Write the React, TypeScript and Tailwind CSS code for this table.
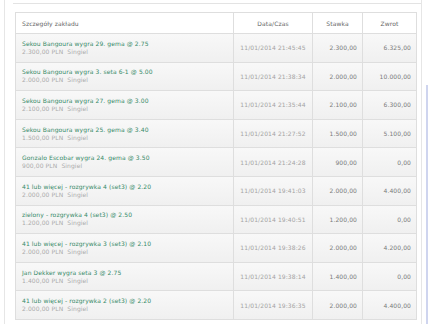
import React from "react";

const rows = [
  ["Sekou Bangoura wygra 29. gema @ 2.75", "2.300,00", "11/01/2014 21:45:45", "6.325,00"],
  ["Sekou Bangoura wygra 3. seta 6-1 @ 5.00", "2.000,00", "11/01/2014 21:38:34", "10.000,00"],
  ["Sekou Bangoura wygra 27. gema @ 3.00", "2.100,00", "11/01/2014 21:35:44", "6.300,00"],
  ["Sekou Bangoura wygra 25. gema @ 3.40", "1.500,00", "11/01/2014 21:27:52", "5.100,00"],
  ["Gonzalo Escobar wygra 24. gema @ 3.50", "900,00", "11/01/2014 21:24:28", "0,00"],
  ["41 lub więcej - rozgrywka 4 (set3) @ 2.20", "2.000,00", "11/01/2014 19:41:03", "4.400,00"],
  ["zielony - rozgrywka 4 (set3) @ 2.50", "1.200,00", "11/01/2014 19:40:51", "0,00"],
  ["41 lub więcej - rozgrywka 3 (set3) @ 2.10", "2.000,00", "11/01/2014 19:38:26", "4.200,00"],
  ["Jan Dekker wygra seta 3 @ 2.75", "1.400,00", "11/01/2014 19:38:14", "0,00"],
  ["41 lub więcej - rozgrywka 2 (set3) @ 2.20", "2.000,00", "11/01/2014 19:36:35", "4.400,00"],
];

export default function App() {
  return (
    <div
      className="flex w-[433px] h-[324px] bg-white overflow-hidden"
      style={{ fontFamily: '"DejaVu Sans", Verdana, sans-serif' }}
    >
      <div className="w-[4px] shrink-0" />
      <div className="w-[418px] shrink-0 border-l border-r border-[#e6e6e6] flex flex-col">
        <div className="h-[4px] ml-[8px] border-b border-[#e3e3e3]" />
        <div className="mt-[8px] ml-[10px] w-[402px] border border-[#dedede] text-[6px] tracking-[0.1px]">
          <div className="grid grid-cols-[217px_79px_50px_54px] h-[20px] bg-white text-[#666]">
            <div className="flex items-center pl-[6px]">Szczegóły zakładu</div>
            <div className="flex items-center justify-center border-l border-[#dedede]">Data/Czas</div>
            <div className="flex items-center justify-center border-l border-[#dedede]">Stawka</div>
            <div className="flex items-center justify-center border-l border-[#dedede]">Zwrot</div>
          </div>
          {rows.map((r, i) => (
            <div
              key={i}
              className="grid grid-cols-[217px_79px_50px_54px] h-[28.6px] border-t border-[#dedede] bg-gradient-to-b from-[#f8f8f8] to-[#f0f0f0]"
            >
              <div className="flex flex-col justify-center pl-[6px] leading-[8px]">
                <div className="text-[#358a68]">{r[0]}</div>
                <div className="text-[#ababab]">{r[1]} PLN&nbsp; Singiel</div>
              </div>
              <div className="flex items-center justify-center border-l border-[#dedede] text-[#a3a3a3]">{r[2]}</div>
              <div className="flex items-center justify-end pr-[5px] border-l border-[#dedede] text-[#7a7a7a]">{r[1]}</div>
              <div className="flex items-center justify-end pr-[5px] border-l border-[#dedede] text-[#7a7a7a]">{r[3]}</div>
            </div>
          ))}
        </div>
      </div>
      <div className="flex-1 pt-[85px] pl-[4px]">
        <div className="w-[2px] h-full bg-[#cfd5ef]" />
      </div>
    </div>
  );
}
